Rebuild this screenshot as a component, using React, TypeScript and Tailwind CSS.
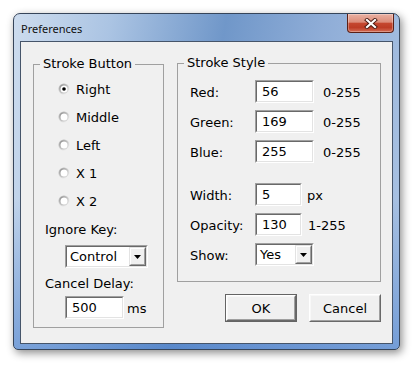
import React from "react";

const font = "font-['DejaVu_Sans',sans-serif] text-[13px] text-black";

function Sunken({ className = "", children }: { className?: string; children?: React.ReactNode }) {
  return (
    <div
      className={`border border-t-[#a0a0a0] border-l-[#a0a0a0] border-b-[#ffffff] border-r-[#ffffff] ${className}`}
    >
      <div className="h-full w-full border border-t-[#696969] border-l-[#696969] border-b-[#e3e3e3] border-r-[#e3e3e3] bg-white flex items-center">
        {children}
      </div>
    </div>
  );
}

function Edit({ value, w }: { value: string; w: string }) {
  return (
    <Sunken className={`h-[23px] ${w}`}>
      <span className="pl-[5px] leading-none">{value}</span>
    </Sunken>
  );
}

function DropBtn() {
  return (
    <div className="h-full w-[17px] border border-t-[#e3e3e3] border-l-[#e3e3e3] border-b-[#696969] border-r-[#696969]">
      <div className="h-full w-full border border-t-[#ffffff] border-l-[#ffffff] border-b-[#a0a0a0] border-r-[#a0a0a0] bg-[#f0f0f0] flex items-center justify-center">
        <svg width="7" height="4" viewBox="0 0 7 4">
          <path d="M0 0 H7 L3.5 4 Z" fill="#000" />
        </svg>
      </div>
    </div>
  );
}

function Combo({ value, w }: { value: string; w: string }) {
  return (
    <Sunken className={`h-[23px] ${w}`}>
      <span className="pl-[3px] leading-none flex-1">{value}</span>
      <DropBtn />
    </Sunken>
  );
}

function Radio({ checked }: { checked?: boolean }) {
  return (
    <svg width="12" height="12" viewBox="0 0 12 12" className="shrink-0">
      <defs>
        <linearGradient id="rOuter" x1="0" y1="0" x2="1" y2="1">
          <stop offset="0" stopColor="#a8a8a8" />
          <stop offset="0.5" stopColor="#d0d0d0" />
          <stop offset="1" stopColor="#ffffff" />
        </linearGradient>
        <linearGradient id="rInner" x1="0" y1="0" x2="1" y2="1">
          <stop offset="0" stopColor="#7a7a7a" />
          <stop offset="0.5" stopColor="#bcbcbc" />
          <stop offset="1" stopColor="#e3e3e3" />
        </linearGradient>
      </defs>
      <circle cx="6" cy="6" r="5.5" fill="url(#rOuter)" />
      <circle cx="6" cy="6" r="4.5" fill="url(#rInner)" />
      <circle cx="6" cy="6" r="3.5" fill="#ffffff" />
      {checked && <circle cx="6" cy="6" r="1.8" fill="#000000" />}
    </svg>
  );
}

function RadioRow({ label, checked }: { label: string; checked?: boolean }) {
  return (
    <div className="h-[28px] flex items-center pl-[24px] gap-[6px]">
      <Radio checked={checked} />
      <span className="leading-none">{label}</span>
    </div>
  );
}

function Button({ label, def }: { label: string; def?: boolean }) {
  return (
    <div className={`h-[28px] w-[72px] ${def ? "border border-[#646464]" : ""}`}>
      <div className="h-full w-full border border-t-[#ffffff] border-l-[#ffffff] border-b-[#696969] border-r-[#696969]">
        <div className="h-full w-full border border-t-[#f8f8f8] border-l-[#f8f8f8] border-b-[#a0a0a0] border-r-[#a0a0a0] bg-[#f0f0f0] flex items-center justify-center">
          <span className="leading-none">{label}</span>
        </div>
      </div>
    </div>
  );
}

function FieldRow({ label, children }: { label: string; children: React.ReactNode }) {
  return (
    <div className="flex items-center pl-[12px]">
      <span className="w-[65px] leading-none pt-[2px]">{label}</span>
      {children}
    </div>
  );
}

export default function App() {
  return (
    <div className="w-[416px] h-[365px] bg-white overflow-hidden pl-[13px] pt-[13px]">
      <div className="relative w-[387px] h-[337px] flex flex-col rounded-t-[7px] rounded-b-[5px] border border-[#36455a] shadow-[2px_3px_9px_rgba(0,0,0,0.45)] bg-[linear-gradient(180deg,rgba(255,255,255,0)_55%,rgba(70,125,205,0.55)_100%),linear-gradient(100deg,#cddcee_0%,#abc4e3_22%,#7097c9_48%,#8fadd7_70%,#adc5e4_100%)] px-[6px] pb-[5px]">
        {/* title bar */}
        <div className="h-[27px] flex items-center pl-[1px] shrink-0">
          <span className="font-['Noto_Sans',sans-serif] text-[11px] text-[#111] leading-none pt-[1px]">
            Preferences
          </span>
        </div>
        {/* close button */}
        <div className="absolute top-0 right-[5px] w-[47px] h-[19px] rounded-b-[4px] border border-t-0 border-[#5b2016] bg-[linear-gradient(180deg,#eab1a3_0%,#dc8d7a_45%,#c4472f_52%,#bd3d26_75%,#d46c55_100%)] flex items-center justify-center shadow-[inset_0_0_0_1px_rgba(255,255,255,0.3)]">
          <svg width="14" height="11" viewBox="0 0 14 11">
            <path d="M3 2 L11 9 M11 2 L3 9" stroke="#4a1a12" strokeWidth="4" strokeLinecap="square" />
            <path d="M3 2 L11 9 M11 2 L3 9" stroke="#ffffff" strokeWidth="2.2" strokeLinecap="square" />
          </svg>
        </div>
        {/* client area */}
        <div className={`flex-1 border border-[#46556a] bg-[#f0f0f0] flex pl-[12px] ${font}`}>
          {/* left column */}
          <div className="pt-[14px]">
            <fieldset className="w-[131px] border border-[#a0a0a0] pb-[8px]">
              <legend className="ml-[6px] px-[3px] leading-[16px]">Stroke Button</legend>
              <div className="mt-[3px]">
                <RadioRow label="Right" checked />
                <RadioRow label="Middle" />
                <RadioRow label="Left" />
                <RadioRow label="X 1" />
                <RadioRow label="X 2" />
              </div>
              <div className="h-[28px] flex items-center pl-[11px]">
                <span className="leading-none">Ignore Key:</span>
              </div>
              <div className="mt-[2px] ml-[31px]">
                <Combo value="Control" w="w-[83px]" />
              </div>
              <div className="mt-[2px] h-[26px] flex items-center pl-[11px]">
                <span className="leading-none">Cancel Delay:</span>
              </div>
              <div className="ml-[31px] flex items-center">
                <Edit value="500" w="w-[59px]" />
                <span className="ml-[3px] leading-none pt-[2px]">ms</span>
              </div>
            </fieldset>
          </div>
          {/* right column */}
          <div className="ml-[13px] w-[204px] pt-[13px] flex flex-col">
            <fieldset className="border border-[#a0a0a0] pb-[15px]">
              <legend className="ml-[6px] px-[3px] leading-[16px]">Stroke Style</legend>
              <div className="mt-[9px] flex flex-col gap-[7px]">
                <FieldRow label="Red:">
                  <Edit value="56" w="w-[59px]" />
                  <span className="ml-[9px] leading-none pt-[2px]">0-255</span>
                </FieldRow>
                <FieldRow label="Green:">
                  <Edit value="169" w="w-[59px]" />
                  <span className="ml-[9px] leading-none pt-[2px]">0-255</span>
                </FieldRow>
                <FieldRow label="Blue:">
                  <Edit value="255" w="w-[59px]" />
                  <span className="ml-[9px] leading-none pt-[2px]">0-255</span>
                </FieldRow>
              </div>
              <div className="mt-[20px] flex flex-col gap-[7px]">
                <FieldRow label="Width:">
                  <Edit value="5" w="w-[47px]" />
                  <span className="ml-[5px] leading-none pt-[2px]">px</span>
                </FieldRow>
                <FieldRow label="Opacity:">
                  <Edit value="130" w="w-[47px]" />
                  <span className="ml-[6px] leading-none pt-[2px]">1-255</span>
                </FieldRow>
                <FieldRow label="Show:">
                  <Combo value="Yes" w="w-[59px]" />
                </FieldRow>
              </div>
            </fieldset>
            <div className="mt-[12px] flex justify-end gap-[12px]">
              <Button label="OK" def />
              <Button label="Cancel" />
            </div>
          </div>
        </div>
      </div>
    </div>
  );
}
